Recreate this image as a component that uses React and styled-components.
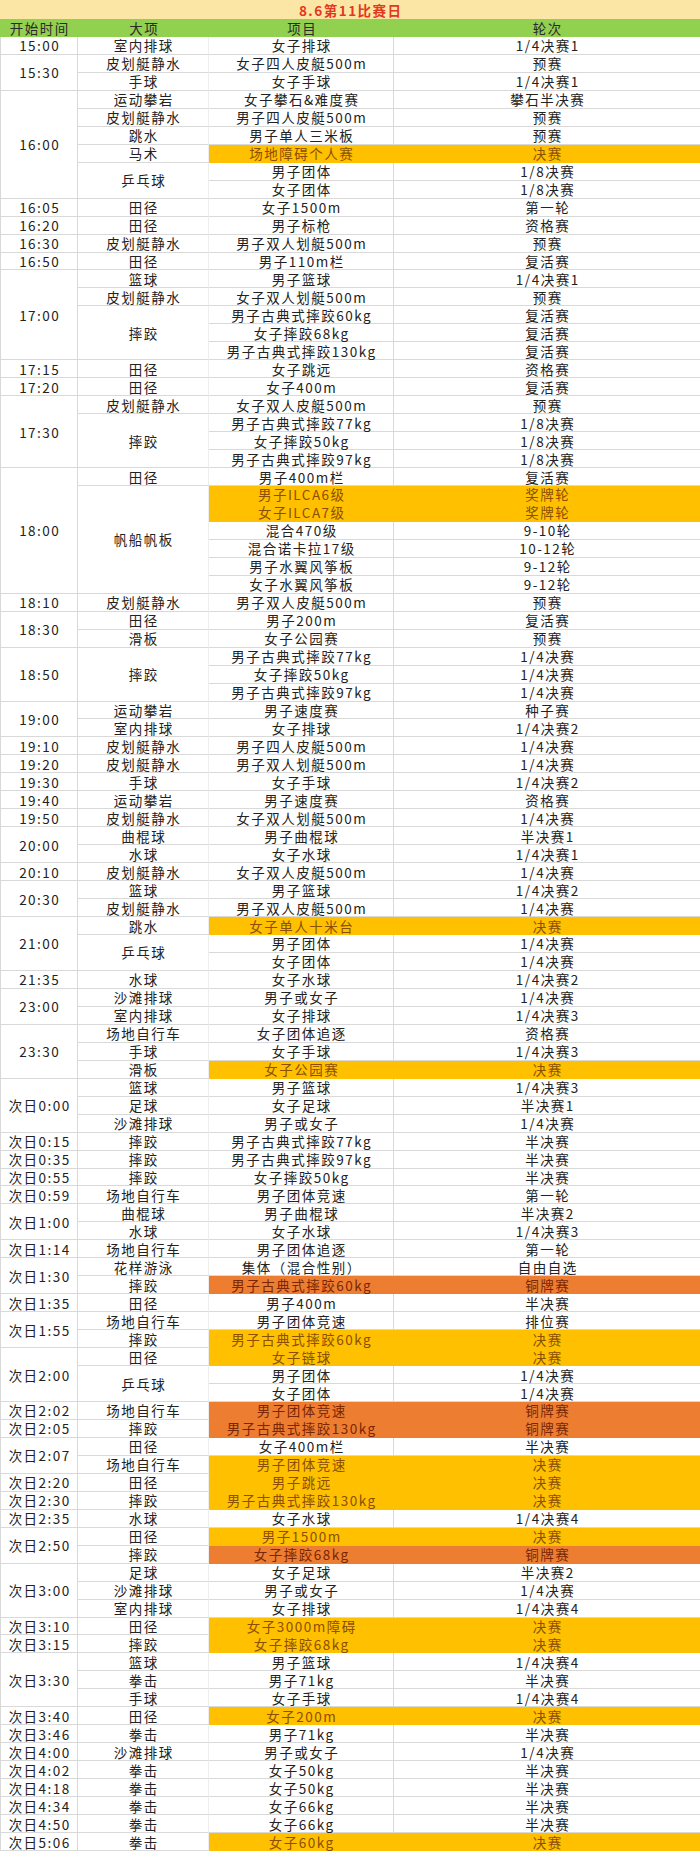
import React from "react";
import styled, { createGlobalStyle } from "styled-components";

const Global = createGlobalStyle`
  html, body { margin: 0; padding: 0; background: #fff; }
`;

const LINE = "#d9d9d9";
const FAINT = "#eeeeee";

const FILLS = {
  y: { bg: "#FFC000", fg: "#8a4f00" },
  o: { bg: "#ED7D31", fg: "#7a2604" },
};

const Sheet = styled.div`
  display: grid;
  width: 700px;
  height: 1851px;
  grid-template-columns: 78px 131px 185px 1fr;
  grid-template-rows: 19px 18px repeat(101, 1fr);
  font-family: "Noto Sans CJK SC", "Noto Sans", sans-serif;
  font-size: 13.5px;
  color: #222;
  box-sizing: border-box;
`;

const TitleBar = styled.div`
  grid-column: 1 / -1;
  grid-row: 1;
  background: #fce6a6;
  color: #e2391d;
  font-weight: 700;
  display: flex;
  align-items: center;
  justify-content: center;
`;

const HeadCell = styled.div`
  grid-row: 2;
  background: #92d050;
  color: #2a2a2a;
  display: flex;
  align-items: center;
  justify-content: center;
`;

const Txt = styled.span`
  white-space: nowrap;
  line-height: 16px;
  letter-spacing: 1.5px;
  margin-right: -1.5px;
`;

const BaseCell = styled.div`
  grid-row: ${(p) => p.$row} / span ${(p) => p.$span || 1};
  display: flex;
  align-items: center;
  justify-content: center;
  box-sizing: border-box;
  min-height: 0;
`;

const TimeCell = styled(BaseCell)`
  grid-column: 1;
  border-left: 1px solid ${LINE};
  border-right: 1px solid ${LINE};
  border-bottom: 1px solid ${LINE};
`;

const SportCell = styled(BaseCell)`
  grid-column: 2;
  border-right: 1px solid ${FAINT};
  border-bottom: 1px solid ${LINE};
`;

const EventCell = styled(BaseCell)`
  grid-column: 3;
  background: ${(p) => (p.$tone ? FILLS[p.$tone].bg : "#fff")};
  color: ${(p) => (p.$tone ? FILLS[p.$tone].fg : "inherit")};
  border-right: 1px solid ${(p) => (p.$tone ? FILLS[p.$tone].bg : LINE)};
  border-bottom: 1px solid ${(p) => (p.$tone ? FILLS[p.$tone].bg : LINE)};
`;

const RoundCell = styled(BaseCell)`
  grid-column: 4;
  background: ${(p) => (p.$tone ? FILLS[p.$tone].bg : "#fff")};
  color: ${(p) => (p.$tone ? FILLS[p.$tone].fg : "inherit")};
  border-bottom: 1px solid ${(p) => (p.$tone ? FILLS[p.$tone].bg : LINE)};
`;

const N = null;
const groups = [
  ["15:00", [["室内排球", "女子排球", "1/4决赛1"]]],
  ["15:30", [["皮划艇静水", "女子四人皮艇500m", "预赛"], ["手球", "女子手球", "1/4决赛1"]]],
  ["16:00", [
    ["运动攀岩", "女子攀石&难度赛", "攀石半决赛"],
    ["皮划艇静水", "男子四人皮艇500m", "预赛"],
    ["跳水", "男子单人三米板", "预赛"],
    ["马术", "场地障碍个人赛", "决赛", "y"],
    ["乒乓球", "男子团体", "1/8决赛"],
    [N, "女子团体", "1/8决赛"],
  ]],
  ["16:05", [["田径", "女子1500m", "第一轮"]]],
  ["16:20", [["田径", "男子标枪", "资格赛"]]],
  ["16:30", [["皮划艇静水", "男子双人划艇500m", "预赛"]]],
  ["16:50", [["田径", "男子110m栏", "复活赛"]]],
  ["17:00", [
    ["篮球", "男子篮球", "1/4决赛1"],
    ["皮划艇静水", "女子双人划艇500m", "预赛"],
    ["摔跤", "男子古典式摔跤60kg", "复活赛"],
    [N, "女子摔跤68kg", "复活赛"],
    [N, "男子古典式摔跤130kg", "复活赛"],
  ]],
  ["17:15", [["田径", "女子跳远", "资格赛"]]],
  ["17:20", [["田径", "女子400m", "复活赛"]]],
  ["17:30", [
    ["皮划艇静水", "女子双人皮艇500m", "预赛"],
    ["摔跤", "男子古典式摔跤77kg", "1/8决赛"],
    [N, "女子摔跤50kg", "1/8决赛"],
    [N, "男子古典式摔跤97kg", "1/8决赛"],
  ]],
  ["18:00", [
    ["田径", "男子400m栏", "复活赛"],
    ["帆船帆板", "男子ILCA6级", "奖牌轮", "y"],
    [N, "女子ILCA7级", "奖牌轮", "y"],
    [N, "混合470级", "9-10轮"],
    [N, "混合诺卡拉17级", "10-12轮"],
    [N, "男子水翼风筝板", "9-12轮"],
    [N, "女子水翼风筝板", "9-12轮"],
  ]],
  ["18:10", [["皮划艇静水", "男子双人皮艇500m", "预赛"]]],
  ["18:30", [["田径", "男子200m", "复活赛"], ["滑板", "女子公园赛", "预赛"]]],
  ["18:50", [
    ["摔跤", "男子古典式摔跤77kg", "1/4决赛"],
    [N, "女子摔跤50kg", "1/4决赛"],
    [N, "男子古典式摔跤97kg", "1/4决赛"],
  ]],
  ["19:00", [["运动攀岩", "男子速度赛", "种子赛"], ["室内排球", "女子排球", "1/4决赛2"]]],
  ["19:10", [["皮划艇静水", "男子四人皮艇500m", "1/4决赛"]]],
  ["19:20", [["皮划艇静水", "男子双人划艇500m", "1/4决赛"]]],
  ["19:30", [["手球", "女子手球", "1/4决赛2"]]],
  ["19:40", [["运动攀岩", "男子速度赛", "资格赛"]]],
  ["19:50", [["皮划艇静水", "女子双人划艇500m", "1/4决赛"]]],
  ["20:00", [["曲棍球", "男子曲棍球", "半决赛1"], ["水球", "女子水球", "1/4决赛1"]]],
  ["20:10", [["皮划艇静水", "女子双人皮艇500m", "1/4决赛"]]],
  ["20:30", [["篮球", "男子篮球", "1/4决赛2"], ["皮划艇静水", "男子双人皮艇500m", "1/4决赛"]]],
  ["21:00", [
    ["跳水", "女子单人十米台", "决赛", "y"],
    ["乒乓球", "男子团体", "1/4决赛"],
    [N, "女子团体", "1/4决赛"],
  ]],
  ["21:35", [["水球", "女子水球", "1/4决赛2"]]],
  ["23:00", [["沙滩排球", "男子或女子", "1/4决赛"], ["室内排球", "女子排球", "1/4决赛3"]]],
  ["23:30", [
    ["场地自行车", "女子团体追逐", "资格赛"],
    ["手球", "女子手球", "1/4决赛3"],
    ["滑板", "女子公园赛", "决赛", "y"],
  ]],
  ["次日0:00", [
    ["篮球", "男子篮球", "1/4决赛3"],
    ["足球", "女子足球", "半决赛1"],
    ["沙滩排球", "男子或女子", "1/4决赛"],
  ]],
  ["次日0:15", [["摔跤", "男子古典式摔跤77kg", "半决赛"]]],
  ["次日0:35", [["摔跤", "男子古典式摔跤97kg", "半决赛"]]],
  ["次日0:55", [["摔跤", "女子摔跤50kg", "半决赛"]]],
  ["次日0:59", [["场地自行车", "男子团体竞速", "第一轮"]]],
  ["次日1:00", [["曲棍球", "男子曲棍球", "半决赛2"], ["水球", "女子水球", "1/4决赛3"]]],
  ["次日1:14", [["场地自行车", "男子团体追逐", "第一轮"]]],
  ["次日1:30", [["花样游泳", "集体（混合性别）", "自由自选"], ["摔跤", "男子古典式摔跤60kg", "铜牌赛", "o"]]],
  ["次日1:35", [["田径", "男子400m", "半决赛"]]],
  ["次日1:55", [["场地自行车", "男子团体竞速", "排位赛"], ["摔跤", "男子古典式摔跤60kg", "决赛", "y"]]],
  ["次日2:00", [
    ["田径", "女子链球", "决赛", "y"],
    ["乒乓球", "男子团体", "1/4决赛"],
    [N, "女子团体", "1/4决赛"],
  ]],
  ["次日2:02", [["场地自行车", "男子团体竞速", "铜牌赛", "o"]]],
  ["次日2:05", [["摔跤", "男子古典式摔跤130kg", "铜牌赛", "o"]]],
  ["次日2:07", [["田径", "女子400m栏", "半决赛"], ["场地自行车", "男子团体竞速", "决赛", "y"]]],
  ["次日2:20", [["田径", "男子跳远", "决赛", "y"]]],
  ["次日2:30", [["摔跤", "男子古典式摔跤130kg", "决赛", "y"]]],
  ["次日2:35", [["水球", "女子水球", "1/4决赛4"]]],
  ["次日2:50", [["田径", "男子1500m", "决赛", "y"], ["摔跤", "女子摔跤68kg", "铜牌赛", "o"]]],
  ["次日3:00", [
    ["足球", "女子足球", "半决赛2"],
    ["沙滩排球", "男子或女子", "1/4决赛"],
    ["室内排球", "女子排球", "1/4决赛4"],
  ]],
  ["次日3:10", [["田径", "女子3000m障碍", "决赛", "y"]]],
  ["次日3:15", [["摔跤", "女子摔跤68kg", "决赛", "y"]]],
  ["次日3:30", [
    ["篮球", "男子篮球", "1/4决赛4"],
    ["拳击", "男子71kg", "半决赛"],
    ["手球", "女子手球", "1/4决赛4"],
  ]],
  ["次日3:40", [["田径", "女子200m", "决赛", "y"]]],
  ["次日3:46", [["拳击", "男子71kg", "半决赛"]]],
  ["次日4:00", [["沙滩排球", "男子或女子", "1/4决赛"]]],
  ["次日4:02", [["拳击", "女子50kg", "半决赛"]]],
  ["次日4:18", [["拳击", "女子50kg", "半决赛"]]],
  ["次日4:34", [["拳击", "女子66kg", "半决赛"]]],
  ["次日4:50", [["拳击", "女子66kg", "半决赛"]]],
  ["次日5:06", [["拳击", "女子60kg", "决赛", "y"]]],
];

function buildCells() {
  const cells = [];
  let row = 3;
  groups.forEach(([time, rows], gi) => {
    cells.push(
      <TimeCell key={`t${gi}`} $row={row} $span={rows.length}>
        <Txt>{time}</Txt>
      </TimeCell>
    );
    rows.forEach((r, ri) => {
      const [sport, event, round, tone] = r;
      const rr = row + ri;
      if (sport) {
        let span = 1;
        while (ri + span < rows.length && rows[ri + span][0] === null) span++;
        cells.push(
          <SportCell key={`s${rr}`} $row={rr} $span={span}>
            <Txt>{sport}</Txt>
          </SportCell>
        );
      }
      cells.push(
        <EventCell key={`e${rr}`} $row={rr} $tone={tone}>
          <Txt>{event}</Txt>
        </EventCell>,
        <RoundCell key={`r${rr}`} $row={rr} $tone={tone}>
          <Txt>{round}</Txt>
        </RoundCell>
      );
    });
    row += rows.length;
  });
  return cells;
}

export default function App() {
  return (
    <>
      <Global />
      <Sheet>
        <TitleBar>
          <Txt>8.6第11比赛日</Txt>
        </TitleBar>
        <HeadCell><Txt>开始时间</Txt></HeadCell>
        <HeadCell><Txt>大项</Txt></HeadCell>
        <HeadCell><Txt>项目</Txt></HeadCell>
        <HeadCell><Txt>轮次</Txt></HeadCell>
        {buildCells()}
      </Sheet>
    </>
  );
}
